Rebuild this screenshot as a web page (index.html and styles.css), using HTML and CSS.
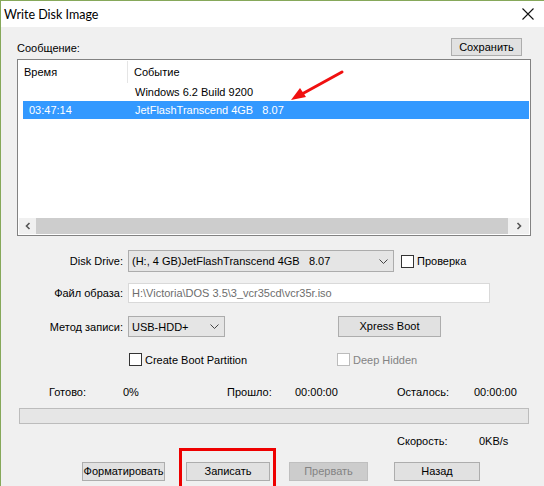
FILE: index.html
```html
<!DOCTYPE html>
<html>
<head>
<meta charset="utf-8">
<link rel="stylesheet" href="styles.css">
</head>
<body>
<div class="window">
  <div class="titlebar">
    <span class="title">Write Disk Image</span>
    <svg class="close" width="12" height="12" viewBox="0 0 12 12"><path d="M0.5 0.5 L11.5 11.5 M11.5 0.5 L0.5 11.5" stroke="#111" stroke-width="1.1" fill="none"/></svg>
  </div>
  <div class="content">
    <div class="msg-head">
      <span class="lbl">Сообщение:</span>
      <button class="btn save">Сохранить</button>
    </div>
    <div class="listview">
      <div class="lv-header">
        <div class="c1">Время</div>
        <div class="sep"></div>
        <div class="c2">Событие</div>
      </div>
      <div class="lv-row">
        <div class="c1"></div>
        <div class="c2">Windows 6.2 Build 9200</div>
      </div>
      <div class="lv-row selected">
        <div class="c1">03:47:14</div>
        <div class="c2">JetFlashTranscend 4GB&nbsp;&nbsp;&nbsp;8.07</div>
      </div>
      <div class="lv-fill"></div>
      <div class="hscroll">
        <div class="sb-btn"><svg width="8" height="8" viewBox="0 0 8 8"><path d="M5.5 1 L2.5 4 L5.5 7" stroke="#555" stroke-width="1.6" fill="none"/></svg></div>
        <div class="sb-thumb"></div>
        <div class="sb-btn"><svg width="8" height="8" viewBox="0 0 8 8"><path d="M2.5 1 L5.5 4 L2.5 7" stroke="#555" stroke-width="1.6" fill="none"/></svg></div>
      </div>
    </div>

    <div class="frow r-drive">
      <span class="flabel">Disk Drive:</span>
      <div class="select drive"><span>(H:, 4 GB)JetFlashTranscend 4GB&nbsp;&nbsp;&nbsp;8.07</span><svg width="9" height="5" viewBox="0 0 9 5"><path d="M0.5 0.5 L4.5 4.5 L8.5 0.5" stroke="#444" stroke-width="1" fill="none"/></svg></div>
      <label class="check"><span class="box"></span>Проверка</label>
    </div>
    <div class="frow r-file">
      <span class="flabel">Файл образа:</span>
      <div class="input">H:\Victoria\DOS 3.5\3_vcr35cd\vcr35r.iso</div>
    </div>
    <div class="frow r-method">
      <span class="flabel">Метод записи:</span>
      <div class="select method"><span>USB-HDD+</span><svg width="9" height="5" viewBox="0 0 9 5"><path d="M0.5 0.5 L4.5 4.5 L8.5 0.5" stroke="#444" stroke-width="1" fill="none"/></svg></div>
      <button class="btn xpress">Xpress Boot</button>
    </div>
    <div class="frow r-checks">
      <label class="check cbp"><span class="box"></span>Create Boot Partition</label>
      <label class="check disabled dh"><span class="box"></span>Deep Hidden</label>
    </div>

    <div class="stats">
      <span class="s1">Готово:</span>
      <span class="s2">0%</span>
      <span class="s3">Прошло:</span>
      <span class="s4">00:00:00</span>
      <span class="s5">Осталось:</span>
      <span class="s6">00:00:00</span>
    </div>
    <div class="progress"></div>
    <div class="speed">
      <span class="sp1">Скорость:</span>
      <span class="sp2">0KB/s</span>
    </div>
    <div class="buttons">
      <button class="btn b-format">Форматировать</button>
      <button class="btn b-write">Записать</button>
      <button class="btn b-abort" disabled>Прервать</button>
      <button class="btn b-back">Назад</button>
    </div>
  </div>

  <svg class="arrow" width="60" height="36" viewBox="0 0 60 36">
    <path d="M52 3 L12 25" stroke="#f01010" stroke-width="3" stroke-linecap="round" fill="none"/>
    <path d="M1 31 L10 19 L16 28 Z" fill="#f01010"/>
  </svg>
  <div class="highlight"></div>
</div>
</body>
</html>
```

FILE: styles.css
```css
* { box-sizing: border-box; }
html, body { margin: 0; padding: 0; }
body {
  width: 544px;
  height: 486px;
  overflow: hidden;
  font-family: "Liberation Sans", Arial, sans-serif;
  font-size: 11px;
  color: #000;
  background: #f0f0f0;
}
.window {
  position: relative;
  width: 544px;
  height: 486px;
  border-top: 1px solid #86a85a;
  border-left: 1px solid #86a85a;
  background: #f0f0f0;
}
.titlebar {
  height: 26px;
  background: #fff;
  display: flex;
  align-items: center;
  justify-content: space-between;
  padding: 0 10px 0 3px;
}
.title {
  font-family: Lato, "Liberation Sans", sans-serif;
  font-size: 12.5px;
  color: #000;
}
.close { display: block; }
.content {
  padding: 11px 13px 0 16px;
}
.msg-head {
  display: flex;
  justify-content: space-between;
  align-items: flex-end;
  height: 18px;
}
.msg-head .lbl { line-height: 13px; padding-bottom: 1px; }
.btn {
  font-family: "Liberation Sans", Arial, sans-serif;
  font-size: 11px;
  color: #000;
  background: #e1e1e1;
  border: 1px solid #adadad;
  padding: 0;
  margin: 0;
  height: 19px;
  line-height: 17px;
}
.btn:disabled {
  background: #cccccc;
  border-color: #bfbfbf;
  color: #838383;
}
.save { width: 71px; height: 18px; margin-right: 9px; }
.listview {
  margin-top: 3px;
  height: 177px;
  border: 1px solid #828282;
  background: #fff;
  display: flex;
  flex-direction: column;
}
.lv-header {
  display: flex;
  height: 23px;
  align-items: center;
}
.lv-header .c1 { width: 109px; padding-left: 6px; }
.lv-header .sep { width: 1px; height: 22px; background: #e5e5e5; align-self: flex-start; margin-top: 1px; }
.lv-header .c2 { padding-left: 6px; }
.lv-row {
  display: flex;
  height: 18px;
  align-items: center;
  margin: 0 1px 0 5px;
}
.lv-row .c1 { width: 112px; padding-left: 6px; }
.lv-row .c2 { padding-left: 0; }
.lv-row.selected { background: #3399ff; color: #fff; }
.lv-fill { flex: 1; }
.hscroll {
  display: flex;
  height: 16px;
  margin: 0 1px 1px 1px;
}
.sb-btn {
  width: 17px;
  background: #f0f0f0;
  display: flex;
  align-items: center;
  justify-content: center;
}
.hscroll .sb-btn:last-child { width: 21px; }
.sb-thumb { flex: 1; background: #cdcdcd; }

.frow { display: flex; align-items: center; }
.flabel { width: 106px; text-align: right; margin-right: 5px; }
.r-drive { margin-top: 14px; height: 22px; }
.r-file { margin-top: 11px; height: 20px; }
.r-method { margin-top: 13px; height: 21px; }
.r-checks { margin-top: 16px; height: 13px; }
.select {
  height: 100%;
  background: #e5e5e5;
  border: 1px solid #acacac;
  display: flex;
  align-items: center;
  justify-content: space-between;
  padding: 0 5px 0 3px;
}
.select svg { display: block; }
.drive { width: 266px; }
.method { width: 97px; }
.input {
  width: 362px;
  height: 100%;
  background: #fff;
  border: 1px solid #d9d9d9;
  color: #6d6d6d;
  padding-left: 3px;
  display: flex;
  align-items: center;
}
.xpress { width: 103px; height: 21px; margin-left: 113px; }
.check {
  display: flex;
  align-items: center;
  height: 13px;
}
.check .box {
  width: 13px;
  height: 13px;
  border: 1px solid #333;
  background: #fff;
  margin-right: 3px;
}
.check.disabled { color: #838383; }
.check.disabled .box { border-color: #bcbcbc; }
.r-drive .check { margin-left: 7px; }
.cbp { margin-left: 112px; width: 208px; }
.dh { margin-left: 0; }

.stats {
  margin-top: 19px;
  height: 14px;
  display: flex;
  align-items: center;
  padding-left: 32px;
}
.stats span { display: block; }
.s1 { width: 74px; }
.s2 { width: 104px; }
.s3 { width: 68px; }
.s4 { width: 102px; }
.s5 { width: 77px; }
.progress {
  margin: 9px 0 0 2px;
  width: 510px;
  height: 16px;
  background: #e6e6e6;
  border: 1px solid #bcbcbc;
}
.speed {
  margin-top: 10px;
  height: 14px;
  display: flex;
  align-items: center;
  padding-left: 380px;
}
.sp1 { width: 82px; }
.buttons {
  margin-top: 14px;
  display: flex;
  padding-left: 65px;
}
.b-format { width: 83px; }
.b-write { width: 84px; margin-left: 21px; }
.b-abort { width: 79px; margin-left: 19px; }
.b-back { width: 86px; margin-left: 26px; }

.arrow {
  position: absolute;
  left: 289px;
  top: 68px;
}
.highlight {
  position: absolute;
  left: 178px;
  top: 447px;
  width: 97px;
  height: 44px;
  border: 3px solid #ee0000;
}
```
